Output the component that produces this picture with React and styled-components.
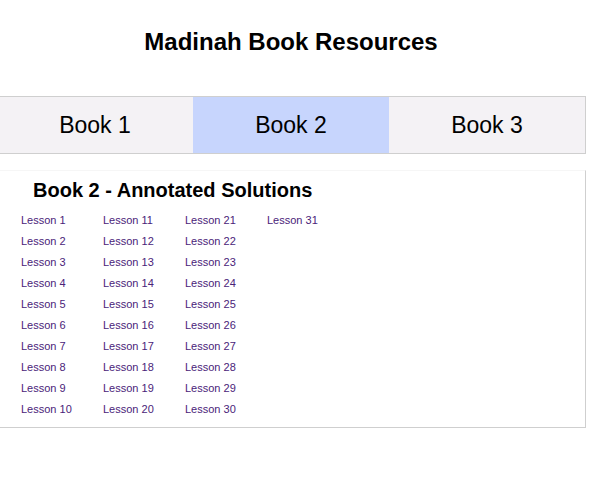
import React from "react";
import styled, { createGlobalStyle } from "styled-components";

const GlobalStyle = createGlobalStyle`
  html, body {
    margin: 0;
    padding: 0;
    background: #ffffff;
    font-family: "Liberation Sans", Arial, sans-serif;
  }
`;

const Page = styled.div`
  width: 590px;
  margin-left: -4px;
`;

const Title = styled.h1`
  margin: 0;
  padding-top: 28px;
  height: 96px;
  box-sizing: border-box;
  font-size: 24px;
  font-weight: bold;
  line-height: 28px;
  text-align: center;
  color: #000;
`;

const Tabs = styled.div`
  display: grid;
  grid-template-columns: repeat(3, 1fr);
  border: 1px solid #cfcfcf;
  height: 58px;
  box-sizing: border-box;
`;

const Tab = styled.div`
  display: flex;
  align-items: center;
  justify-content: center;
  font-size: 23px;
  color: #000;
  background: ${(p) => (p.$active ? "#c7d5fd" : "#f4f2f5")};
  padding-top: 1px;
`;

const Panel = styled.div`
  margin-top: 16px;
  border: 1px solid #cfcfcf;
  border-top: 1px solid #f6f6f6;
  padding: 8px 0 7px 24px;
`;

const Heading = styled.h2`
  margin: 0 0 8px 12px;
  font-size: 20px;
  font-weight: bold;
  line-height: 23px;
  color: #000;
`;

const LessonGrid = styled.div`
  display: grid;
  grid-template-rows: repeat(10, 21px);
  grid-auto-flow: column;
  grid-auto-columns: 82px;
`;

const LessonLink = styled.a`
  font-size: 11px;
  line-height: 21px;
  color: #4a2379;
  text-decoration: none;
  white-space: nowrap;
`;

const lessons = Array.from({ length: 31 }, (_, i) => i + 1);

export default function App() {
  return (
    <>
      <GlobalStyle />
      <Page>
        <Title>Madinah Book Resources</Title>
        <Tabs>
          <Tab>Book 1</Tab>
          <Tab $active>Book 2</Tab>
          <Tab>Book 3</Tab>
        </Tabs>
        <Panel>
          <Heading>Book 2 - Annotated Solutions</Heading>
          <LessonGrid>
            {lessons.map((n) => (
              <LessonLink key={n} href="#">
                Lesson {n}
              </LessonLink>
            ))}
          </LessonGrid>
        </Panel>
      </Page>
    </>
  );
}
